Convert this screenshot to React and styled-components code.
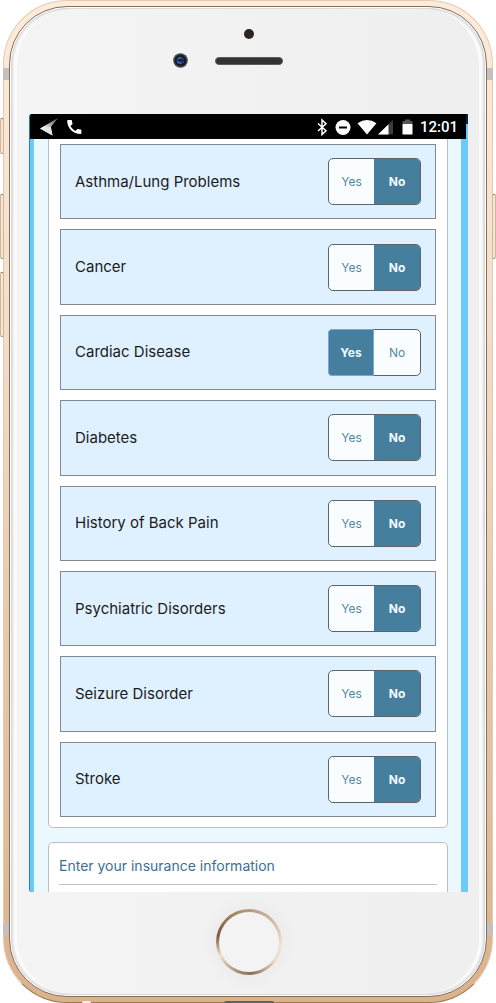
import React, { useState } from "react";
import styled, { createGlobalStyle } from "styled-components";

const GlobalStyle = createGlobalStyle`
  *, *::before, *::after { box-sizing: border-box; }
  body { margin: 0; background: #fff; font-family: Inter, "Open Sans", sans-serif; }
`;

const Page = styled.div`
  padding: 0 3px;
  overflow: hidden;
`;

const Shell = styled.div`
  position: relative;
  display: flex;
  min-height: 100vh;
  padding: 5px;
  border-radius: 64px;
  border: 1px solid #e3ccb6;
  border-bottom-color: #9d7957;
  background: linear-gradient(#fdebdb, #f4dfcc 30%, #e2c2a2 75%, #d9b38c);
`;

const Band = styled.span`
  position: absolute;
  ${(p) => p.$side}: -1px;
  ${(p) => p.$edge}: 67px;
  width: 6px;
  height: 12px;
  background: #c4c0c0;
`;

const SideKey = styled.span`
  position: absolute;
  ${(p) => p.$side}: -4px;
  top: ${(p) => p.$top}px;
  width: 4px;
  height: ${(p) => p.$height}px;
  border: 1px solid #d0b69d;
  border-top-color: #8a7561;
  border-bottom-color: #a98d72;
  border-radius: 3px;
  background: #f6e4d4;
`;

const Port = styled.span`
  position: absolute;
  bottom: -1px;
  left: ${(p) => p.$left};
  width: ${(p) => p.$width}px;
  height: 2px;
  border-radius: 4px 4px 0 0;
  background: ${(p) => p.$color};
`;

const Rim = styled.div`
  flex: 1;
  display: flex;
  min-width: 0;
  padding: 2px 7px;
  border: 1px solid #8a6d52;
  border-radius: 58px;
  background: #fbfbfb;
  box-shadow: inset 0 0 0 1px #fff, inset 0 0 2px 3px #d9dadc;
`;

const Face = styled.div`
  flex: 1;
  display: flex;
  flex-direction: column;
  min-width: 0;
  padding: 0 11px 0 12px;
  border-radius: 56px;
  background: linear-gradient(90deg, #f4f4f4, #efefef);
`;

const TopBezel = styled.header`
  display: flex;
  flex-direction: column;
  align-items: center;
  height: 105px;
  padding-top: 20px;
`;

const Sensor = styled.span`
  width: 10px;
  height: 10px;
  border-radius: 50%;
  background: #2b2523;
`;

const SpeakerRow = styled.div`
  display: grid;
  grid-template-columns: 1fr 68px 1fr;
  align-items: center;
  width: 100%;
  margin-top: 14px;
`;

const Speaker = styled.span`
  height: 8px;
  border: 1px solid #5b5e5d;
  border-radius: 4px;
  background: #333;
`;

const Camera = styled.svg`
  justify-self: end;
  margin-right: 27px;
`;

const Screen = styled.main`
  flex: 1 0 0;
  min-height: 0;
  display: flex;
  flex-direction: column;
  overflow: hidden;
  padding-right: 1px;
  border-left: 1px solid #287baf;
  border-radius: 3px 0 0 3px;
  background: linear-gradient(#02263d 10px, #6ccaf8 10px);
`;

const StatusBar = styled.div`
  display: flex;
  align-items: center;
  justify-content: space-between;
  height: 25px;
  margin-right: 1px;
  padding: 0 8px 0 9px;
  background: #000;
  color: #fff;
`;

const StatusGroup = styled.div`
  display: flex;
  align-items: center;
`;

const Clock = styled.time`
  margin-left: 6px;
  font: 500 15px/24px Roboto, sans-serif;
`;

const Viewport = styled.div`
  flex: 1 0 0;
  min-height: 0;
  overflow: hidden;
  margin: 0 6px 0 4px;
  padding: 0 13px 0 14px;
  background: #ecf8ff;
`;

const Card = styled.section`
  border: 1px solid #bbbec1;
  border-radius: ${(p) => (p.$continued ? "0 0 5px 5px" : "5px")};
  border-top-width: ${(p) => (p.$continued ? "0" : "1px")};
  background: #fff;
  & + & { margin-top: 14px; }
`;

const ConditionList = styled.ul`
  display: grid;
  grid-auto-rows: 1fr;
  gap: 10px;
  min-height: 688px;
  margin: 0;
  padding: 5px 11px 10px;
  list-style: none;
`;

const ConditionRow = styled.li`
  display: flex;
  align-items: center;
  justify-content: space-between;
  padding: 0 14px;
  border: 1px solid #828b94;
  background: #dff1ff;
`;

const ConditionName = styled.span`
  font-size: 15px;
  line-height: 20px;
  color: #1b1b1d;
`;

const Toggle = styled.div`
  display: grid;
  grid-template-columns: 45px 46px;
  height: 47px;
  border: 1px solid #5c6469;
  border-radius: 5px;
  width: 93px;
  background: #f9fdff;
`;

const Choice = styled.button`
  margin: ${(p) => (p.$focused ? "-1px 0 -1px -1px" : "0")};
  padding: 0;
  border: ${(p) => (p.$focused ? "1px solid #7aa5e0" : "0")};
  border-radius: ${(p) => (p.$first ? "4px 0 0 4px" : "0 4px 4px 0")};
  background: ${(p) => (p.$on ? "#467f9e" : "transparent")};
  color: ${(p) => (p.$on ? "#f4fbff" : "#5588a4")};
  font-family: inherit;
  font-size: 12px;
  font-weight: ${(p) => (p.$on ? 700 : 400)};
  cursor: pointer;
`;

const CardTitle = styled.h2`
  margin: 0 10px;
  padding: 13px 0 8px;
  border-bottom: 1px solid #c2c2c2;
  font-size: 14px;
  line-height: 20px;
  font-weight: 400;
  color: #3b6f92;
`;

const CardBody = styled.div`
  height: 60px;
`;

const BottomBezel = styled.footer`
  display: flex;
  justify-content: center;
  height: 102px;
  padding-top: 17px;
`;

const HomeButton = styled.button`
  width: 66px;
  height: 66px;
  padding: 0;
  border: 3px solid transparent;
  border-radius: 50%;
  background:
    linear-gradient(#f3f3f3, #f3f3f3) padding-box,
    conic-gradient(#b59a79, #cdb79f 45deg, #f0e0d0 95deg, #ecdccb 125deg, #8b7056 175deg, #a58b74 200deg, #f0e0d0 245deg, #7c5c41 280deg, #a08060 325deg, #b59a79) border-box;
  box-shadow: 0 0 12px 6px #ececec;
`;

const CONDITIONS = [
  "Asthma/Lung Problems",
  "Cancer",
  "Cardiac Disease",
  "Diabetes",
  "History of Back Pain",
  "Psychiatric Disorders",
  "Seizure Disorder",
  "Stroke",
];

function YesNo({ label, initial }) {
  const [value, setValue] = useState(initial);
  return (
    <Toggle role="group" aria-label={label}>
      {["Yes", "No"].map((option) => (
        <Choice
          key={option}
          type="button"
          $first={option === "Yes"}
          $on={value === option}
          $focused={option === "Yes" && value === "Yes"}
          aria-pressed={value === option}
          onClick={() => setValue(option)}
        >
          {option}
        </Choice>
      ))}
    </Toggle>
  );
}

function LeftStatusIcons() {
  return (
    <svg width="45" height="20" viewBox="0 0 45 20" aria-hidden="true">
      <defs>
        <linearGradient id="arrow" x1="0" y1="1" x2="1" y2="0">
          <stop offset="0.3" stopColor="#fff" />
          <stop offset="0.6" stopColor="#aaa" />
          <stop offset="1" stopColor="#555" />
        </linearGradient>
      </defs>
      <path d="M1 11.5 19 1 11.8 10 13.5 18.500Z" fill="url(#arrow)" />
      <path d="M1 11.5 11.8 10 13.5 18.500Z" fill="#e6e6e6" />
      <path
        d="M29 3h3.2c.5 0 .8.3.8.8 0 1 .2 1.900.5 2.700.1.300 0 .6-.2.8L31.500 9.100c1.100 2.100 2.800 3.800 4.900 4.900l1.700-1.700c.2-.2.5-.3.8-.2.9.300 1.800.500 2.700.500.500 0 .800.300.800.800v2.900c0 .500-.300.800-.800.800C34.200 17.100 28.200 11.100 28.200 3.800c0-.5.3-.8.8-.8z"
        fill="#fff"
      />
    </svg>
  );
}

function RightStatusIcons() {
  return (
    <svg width="98" height="20" viewBox="0 0 98 20" aria-hidden="true">
      <path d="M2 6.500 10 13.700 6 17.500V3L10 6.800 2 14" fill="none" stroke="#fff" strokeWidth="1.500" />
      <circle cx="27" cy="10.500" r="7.500" fill="#fff" />
      <path d="M23 10.500h8" stroke="#000" strokeWidth="2" />
      <path d="M41.500 6.200Q51 0 60.500 6.200L51 17.500Z" fill="#fff" />
      <path d="M77 3v14.500H62Z" fill="#3d3d3d" />
      <path d="M72.500 7.300v10.200H62Z" fill="#fff" />
      <path d="M89 2.500h5V4h2.500v3h-10V4H89Z" fill="#555" />
      <path d="M86.500 7h10v10.500h-10Z" fill="#fff" />
    </svg>
  );
}

export default function App() {
  return (
    <>
      <GlobalStyle />
      <Page>
        <Shell>
          <SideKey $side="left" $top={117} $height={36} />
          <SideKey $side="left" $top={193} $height={65} />
          <SideKey $side="left" $top={271} $height={65} />
          <SideKey $side="right" $top={193} $height={65} />
          <Band $side="left" $edge="top" />
          <Band $side="right" $edge="top" />
          <Band $side="left" $edge="bottom" />
          <Band $side="right" $edge="bottom" />
          <Port $left="16%" $width={9} $color="#f7eee4" />
          <Port $left="45%" $width={50} $color="#66605c" />
          <Rim>
            <Face>
              <TopBezel>
                <Sensor />
                <SpeakerRow>
                  <Camera width="15" height="15" viewBox="0 0 15 15" aria-hidden="true">
                    <circle cx="7.500" cy="7.500" r="7.300" fill="#45484b" />
                    <circle cx="7.500" cy="7.500" r="5.800" fill="#151a26" />
                    <circle cx="7.300" cy="7.500" r="3.800" fill="#263f78" />
                    <path d="M5 5.500l3-1M4 9l4 1.500" stroke="#4f79c9" />
                    <path d="M5.500 7.300h5" stroke="#0c1226" strokeWidth="1.500" />
                  </Camera>
                  <Speaker />
                </SpeakerRow>
              </TopBezel>
              <Screen>
                <StatusBar>
                  <StatusGroup>
                    <LeftStatusIcons />
                  </StatusGroup>
                  <StatusGroup>
                    <RightStatusIcons />
                    <Clock>12:01</Clock>
                  </StatusGroup>
                </StatusBar>
                <Viewport>
                  <Card $continued>
                    <ConditionList>
                      {CONDITIONS.map((name) => (
                        <ConditionRow key={name}>
                          <ConditionName>{name}</ConditionName>
                          <YesNo label={name} initial={name === "Cardiac Disease" ? "Yes" : "No"} />
                        </ConditionRow>
                      ))}
                    </ConditionList>
                  </Card>
                  <Card>
                    <CardTitle>Enter your insurance information</CardTitle>
                    <CardBody />
                  </Card>
                </Viewport>
              </Screen>
              <BottomBezel>
                <HomeButton type="button" aria-label="Home" />
              </BottomBezel>
            </Face>
          </Rim>
        </Shell>
      </Page>
    </>
  );
}
